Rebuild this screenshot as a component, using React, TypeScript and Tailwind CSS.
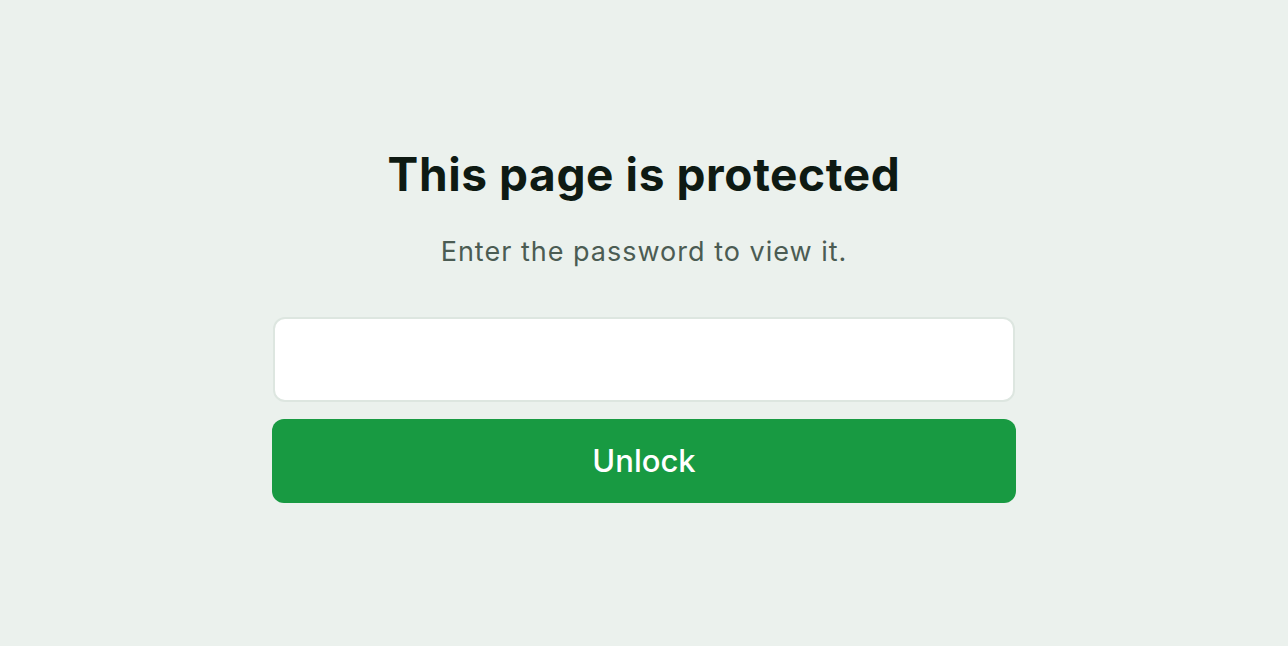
import React, { useState } from 'react';

export default function App() {
  const [password, setPassword] = useState('');

  return (
    <div
      className="min-h-screen w-full bg-[#ebf1ed] flex items-center justify-center"
      style={{ fontFamily: 'Inter, "Noto Sans", sans-serif' }}
    >
      <form
        className="w-[744px] flex flex-col items-center pt-[3px]"
        onSubmit={(e) => e.preventDefault()}
      >
        <h1 className="text-[46px] leading-[56px] font-bold text-[#0e1a13] tracking-[0.6px]">
          This page is protected
        </h1>
        <p className="mt-[33px] text-[27px] leading-[34px] text-[#4b5c53] tracking-[1px]">
          Enter the password to view it.
        </p>
        <input
          type="password"
          value={password}
          onChange={(e) => setPassword(e.target.value)}
          className="mt-[48px] w-[742px] h-[85px] rounded-[12px] bg-white border-2 border-[#dde6e0] px-6 text-[24px] outline-none"
        />
        <button
          type="submit"
          className="mt-[17px] w-full h-[84px] rounded-[12px] bg-[#189a42] text-white text-[31px] font-medium"
        >
          Unlock
        </button>
      </form>
    </div>
  );
}
